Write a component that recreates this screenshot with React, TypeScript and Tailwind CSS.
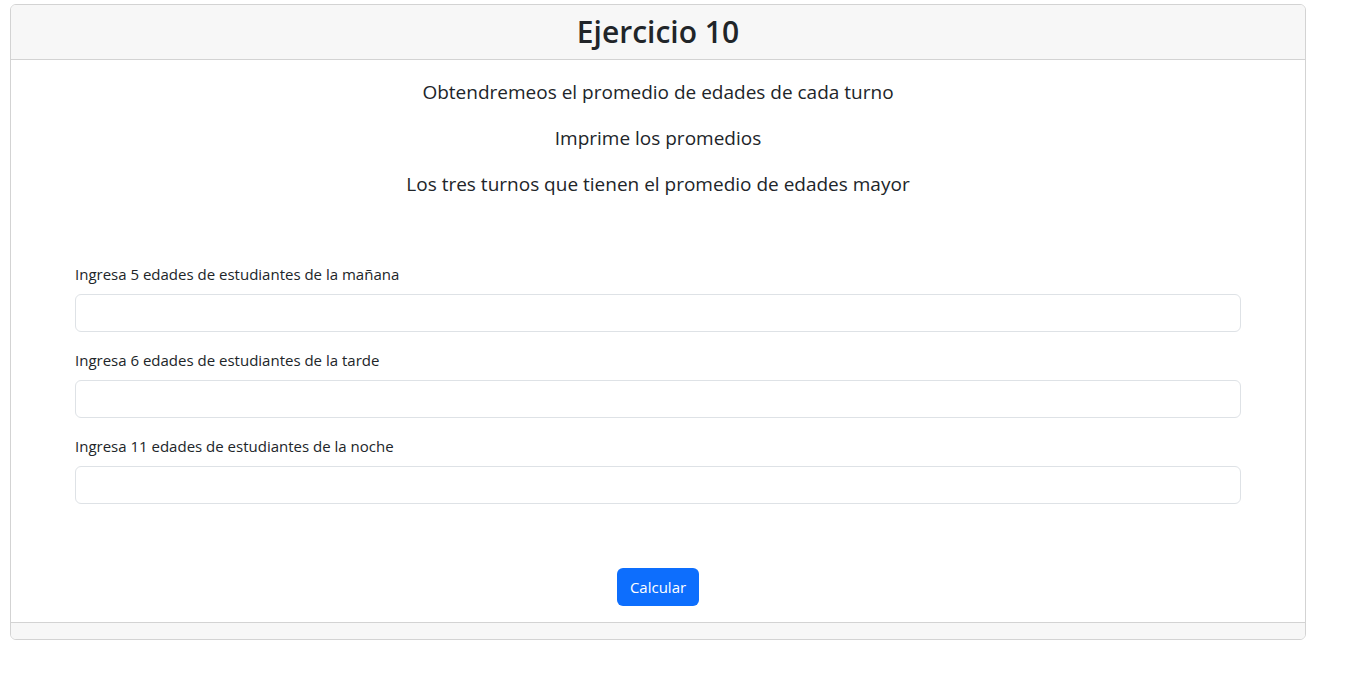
export default function App() {
  const fields = [
    'Ingresa 5 edades de estudiantes de la mañana',
    'Ingresa 6 edades de estudiantes de la tarde',
    'Ingresa 11 edades de estudiantes de la noche',
  ]

  return (
    <div className="min-h-screen bg-white pt-[4px] pl-[10px] font-['Open_Sans',sans-serif] text-[#212529]">
      <div className="w-[1296px] rounded-[6px] border border-[#d3d3d3] overflow-hidden">
        {/* Header */}
        <div className="bg-[#f7f7f7] border-b border-[#d3d3d3] px-4 py-2 text-center">
          <h2 className="text-[30px] leading-[38px] font-semibold">Ejercicio 10</h2>
        </div>

        {/* Body */}
        <div className="p-4">
          <div className="text-center text-[19px] leading-[30px] pt-[1px]">
            <p className="mb-4">Obtendremeos el promedio de edades de cada turno</p>
            <p className="mb-4">Imprime los promedios</p>
            <p>Los tres turnos que tienen el promedio de edades mayor</p>
          </div>

          <form className="mt-[63px] px-12">
            {fields.map((label) => (
              <div key={label} className="mb-4">
                <label className="block mb-2 text-[15px] leading-6">{label}</label>
                <input
                  type="text"
                  className="block w-full h-[38px] rounded-[6px] border border-[#dee2e6] px-3 outline-none"
                />
              </div>
            ))}
            <div className="flex justify-center pt-[48px]">
              <button
                type="button"
                className="h-[38px] px-[13px] rounded-[6px] bg-[#0d6efd] text-white text-[15px] leading-6"
              >
                Calcular
              </button>
            </div>
          </form>
        </div>

        {/* Footer */}
        <div className="h-[17px] bg-[#f7f7f7] border-t border-[#d3d3d3]"></div>
      </div>
    </div>
  )
}
